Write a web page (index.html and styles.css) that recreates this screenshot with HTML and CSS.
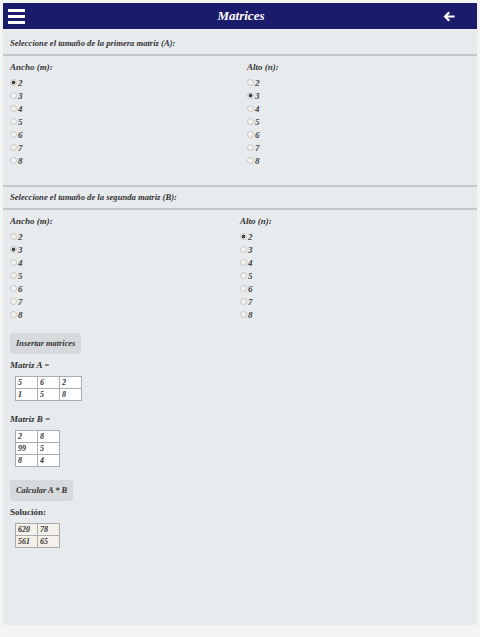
FILE: index.html
```html
<!DOCTYPE html>
<html lang="es">
<head>
  <meta charset="UTF-8">
  <title>Matrices</title>
  <meta name="viewport" content="width=device-width, initial-scale=1.0">
  <link rel="stylesheet" href="styles.css">
</head>
<body>

<div class="pagina">
  <header class="barra">
    <svg class="menu" width="17" height="15" viewBox="0 0 17 15">
      <rect x="0" y="0" width="17" height="3" fill="#fff"/>
      <rect x="0" y="6" width="17" height="3" fill="#fff"/>
      <rect x="0" y="12" width="17" height="3" fill="#fff"/>
    </svg>
    <h1>Matrices</h1>
    <svg class="volver" width="12" height="11" viewBox="0 0 12 11">
      <path d="M5.5 0.5 L0.5 5.5 L5.5 10.5 L7 9 L4.6 6.6 H11.5 V4.4 H4.6 L7 2 Z" fill="#fff"/>
    </svg>
  </header>

  <section class="bloque primero">
    <p class="titulo-bloque">Seleccione el tamaño de la primera matriz (A):</p>
    <div class="columnas col-a">
      <div class="columna">
        <p class="etiqueta">Ancho (m):</p>
        <label class="opcion"><input type="radio" name="am" checked>2</label>
        <label class="opcion"><input type="radio" name="am">3</label>
        <label class="opcion"><input type="radio" name="am">4</label>
        <label class="opcion"><input type="radio" name="am">5</label>
        <label class="opcion"><input type="radio" name="am">6</label>
        <label class="opcion"><input type="radio" name="am">7</label>
        <label class="opcion"><input type="radio" name="am">8</label>
      </div>
      <div class="columna">
        <p class="etiqueta">Alto (n):</p>
        <label class="opcion"><input type="radio" name="an">2</label>
        <label class="opcion"><input type="radio" name="an" checked>3</label>
        <label class="opcion"><input type="radio" name="an">4</label>
        <label class="opcion"><input type="radio" name="an">5</label>
        <label class="opcion"><input type="radio" name="an">6</label>
        <label class="opcion"><input type="radio" name="an">7</label>
        <label class="opcion"><input type="radio" name="an">8</label>
      </div>
    </div>
  </section>

  <section class="bloque segundo">
    <p class="titulo-bloque">Seleccione el tamaño de la segunda matriz (B):</p>
    <div class="columnas col-b">
      <div class="columna">
        <p class="etiqueta">Ancho (m):</p>
        <label class="opcion"><input type="radio" name="bm">2</label>
        <label class="opcion"><input type="radio" name="bm" checked>3</label>
        <label class="opcion"><input type="radio" name="bm">4</label>
        <label class="opcion"><input type="radio" name="bm">5</label>
        <label class="opcion"><input type="radio" name="bm">6</label>
        <label class="opcion"><input type="radio" name="bm">7</label>
        <label class="opcion"><input type="radio" name="bm">8</label>
      </div>
      <div class="columna">
        <p class="etiqueta">Alto (n):</p>
        <label class="opcion"><input type="radio" name="bn" checked>2</label>
        <label class="opcion"><input type="radio" name="bn">3</label>
        <label class="opcion"><input type="radio" name="bn">4</label>
        <label class="opcion"><input type="radio" name="bn">5</label>
        <label class="opcion"><input type="radio" name="bn">6</label>
        <label class="opcion"><input type="radio" name="bn">7</label>
        <label class="opcion"><input type="radio" name="bn">8</label>
      </div>
    </div>
  </section>

  <div class="resultados">
    <button class="boton">Insertar matrices</button>

    <p class="nombre">Matriz A =</p>
    <table class="matriz">
      <tr><td><input value="5"></td><td><input value="6"></td><td><input value="2"></td></tr>
      <tr><td><input value="1"></td><td><input value="5"></td><td><input value="8"></td></tr>
    </table>

    <p class="nombre">Matriz B =</p>
    <table class="matriz">
      <tr><td><input value="2"></td><td><input value="8"></td></tr>
      <tr><td><input value="99"></td><td><input value="5"></td></tr>
      <tr><td><input value="8"></td><td><input value="4"></td></tr>
    </table>

    <button class="boton">Calcular A * B</button>

    <p class="nombre solucion">Solución:</p>
    <table class="matriz resultado">
      <tr><td>620</td><td>78</td></tr>
      <tr><td>561</td><td>65</td></tr>
    </table>
  </div>
</div>

</body>
</html>
```

FILE: styles.css
```css
body {
  margin: 0;
  background: #f3f5f5;
  font-family: "Liberation Serif", "Times New Roman", "DejaVu Serif", serif;
  color: #333;
}

.pagina {
  margin: 3px 3px 0;
  background: #e7ebee;
  min-height: 622px;
}

.barra {
  height: 26px;
  background: #1b1b6b;
  display: flex;
  align-items: center;
  justify-content: space-between;
  padding: 0 22px 0 5px;
}

.barra h1 {
  margin: 0 0 0 14px;
  color: white;
  font-family: inherit;
  font-size: 13px;
  font-style: italic;
  font-weight: bold;
}

.menu {
  display: block;
}

.volver {
  display: block;
}

.titulo-bloque {
  margin: 0;
  padding: 5px 7px 6px;
  font-size: 8.6px;
  line-height: 10px;
  font-style: italic;
  font-weight: bold;
  border-bottom: 2px solid #c3c6c9;
}

.primero .titulo-bloque {
  padding-top: 9px;
}

.segundo {
  border-top: 2px solid #c3c6c9;
}

.columnas {
  display: grid;
  padding: 6px 7px 18px;
}

.col-a {
  grid-template-columns: 237px 1fr;
}

.col-b {
  grid-template-columns: 230px 1fr;
  padding-bottom: 12px;
}

.etiqueta {
  margin: 0 0 4px;
  font-size: 9px;
  line-height: 10px;
  font-style: italic;
  font-weight: bold;
}

.opcion {
  display: flex;
  align-items: center;
  height: 13px;
  font-size: 9px;
  font-style: italic;
  font-weight: bold;
  color: #444;
}

.opcion input {
  appearance: none;
  width: 7px;
  height: 7px;
  margin: 0 1px 0 0;
  border: 1px solid #c4c4c4;
  border-radius: 50%;
  background: #f2f2f2;
}

.opcion input:checked {
  background: radial-gradient(circle, #444 0 1.6px, #f2f2f2 2.2px);
}

.resultados {
  padding: 0 7px;
}

.boton {
  display: block;
  height: 21px;
  padding: 0 6px;
  border: none;
  border-radius: 3px;
  background: #d7dadc;
  color: #333;
  font-family: inherit;
  font-size: 8.4px;
  font-style: italic;
  font-weight: bold;
}

.nombre {
  margin: 6px 0 6px;
  font-size: 9px;
  line-height: 10px;
  font-style: italic;
  font-weight: bold;
}

.solucion {
  font-style: normal;
}

.matriz {
  margin-left: 5px;
  border-collapse: collapse;
  margin-bottom: 13px;
}

.matriz td {
  padding: 0;
  border: 1px solid #a9abad;
}

.matriz input {
  display: block;
  width: 21px;
  height: 11px;
  box-sizing: border-box;
  border: none;
  padding: 0 2px;
  background: white;
  font-family: inherit;
  font-size: 8px;
  font-style: italic;
  font-weight: bold;
  color: #333;
}

.resultado td {
  width: 17px;
  height: 11px;
  padding: 0 2px;
  background: #f3f1ea;
  font-size: 8px;
  font-style: italic;
  font-weight: bold;
  line-height: 11px;
}
```
